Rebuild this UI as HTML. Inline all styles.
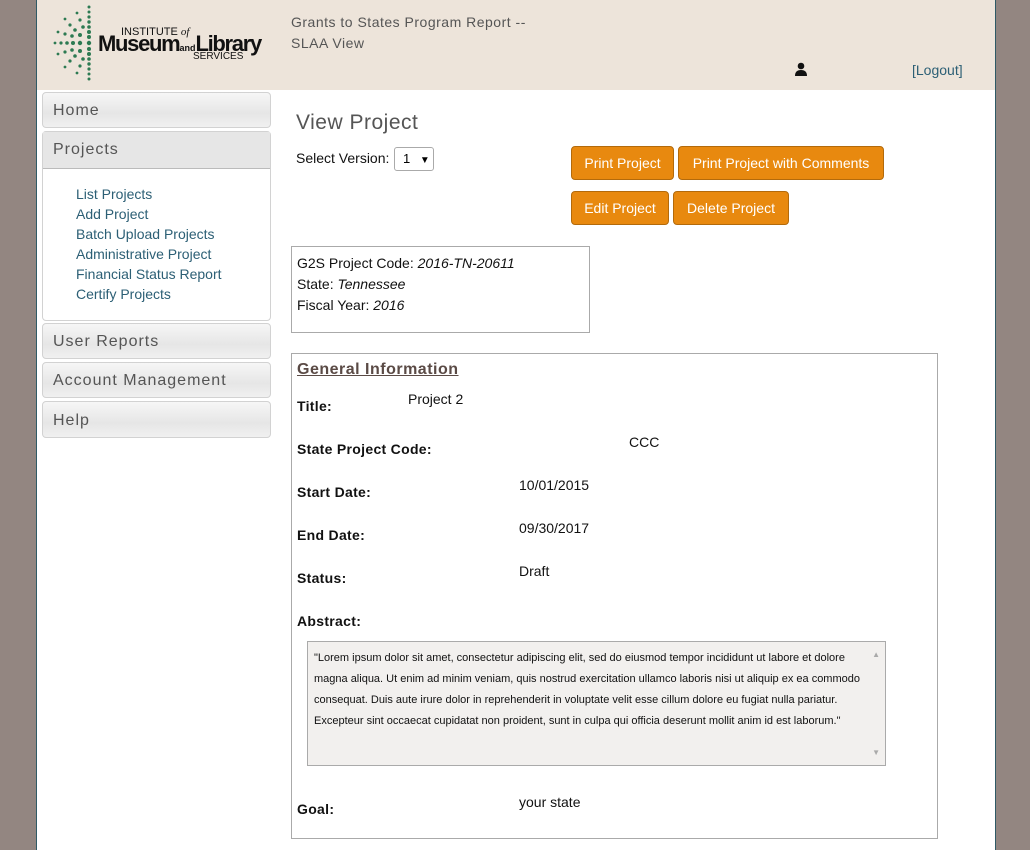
<!DOCTYPE html>
<html><head><style>
*{box-sizing:border-box}
body{margin:0;background:#938681;font-family:"Liberation Sans",Arial,sans-serif;width:1030px;height:850px;overflow:hidden}
#page{position:absolute;left:36px;top:0;width:960px;height:850px;background:#fff;border-left:1px solid #2f5a66;border-right:1px solid #2f5a66}
#hdr{position:absolute;left:0;top:0;width:958px;height:90px;background:#ede4da}
.abs{position:absolute}
.nav{position:absolute;left:5px;width:229px;border:1px solid #d2d2d2;border-radius:4px;background:linear-gradient(#f6f6f6,#e6e6e6 60%,#f0f0f0);color:#555;font-size:16px;letter-spacing:1px;padding-left:10px}
.btn{position:absolute;height:34px;background:#e8890f;border:1px solid #b36a0b;border-radius:4px;color:#fff;font-size:14px;line-height:32px;text-align:center}
.lbl{position:absolute;left:6px;font-weight:bold;font-size:14px;letter-spacing:.3px;color:#111}
.val{position:absolute;font-size:14px;color:#111}
.sub a{display:block;color:#2c5f75;font-size:14px;line-height:20px;text-decoration:none}
</style></head><body>
<div id="page">
<div id="hdr">
<svg class="abs" style="left:14px;top:4px" width="46" height="78" viewBox="0 0 46 78">
<g fill="#2d7a52">
<circle cx="38" cy="3" r="1.5"/><circle cx="38" cy="8" r="1.5"/><circle cx="38" cy="13" r="1.6"/><circle cx="38" cy="18" r="1.7"/><circle cx="38" cy="23" r="1.8"/><circle cx="38" cy="28" r="2"/><circle cx="38" cy="33" r="2"/><circle cx="38" cy="39" r="2.2"/><circle cx="38" cy="45" r="2"/><circle cx="38" cy="50" r="2"/><circle cx="38" cy="55" r="1.8"/><circle cx="38" cy="60" r="1.7"/><circle cx="38" cy="65" r="1.6"/><circle cx="38" cy="70" r="1.5"/><circle cx="38" cy="75" r="1.5"/>
<circle cx="4" cy="39" r="1.4"/><circle cx="10" cy="39" r="1.6"/><circle cx="16" cy="39" r="1.8"/><circle cx="22" cy="39" r="2"/><circle cx="29" cy="39" r="2.2"/>
<circle cx="14" cy="15" r="1.4"/><circle cx="19" cy="21" r="1.6"/><circle cx="24" cy="26" r="1.8"/><circle cx="29" cy="31" r="2"/>
<circle cx="14" cy="63" r="1.4"/><circle cx="19" cy="57" r="1.6"/><circle cx="24" cy="52" r="1.8"/><circle cx="29" cy="47" r="2"/>
<circle cx="7" cy="28" r="1.4"/><circle cx="14" cy="30" r="1.6"/><circle cx="21" cy="32" r="1.8"/>
<circle cx="7" cy="50" r="1.4"/><circle cx="14" cy="48" r="1.6"/><circle cx="21" cy="46" r="1.8"/>
<circle cx="26" cy="9" r="1.4"/><circle cx="29" cy="16" r="1.6"/><circle cx="32" cy="23" r="1.8"/>
<circle cx="26" cy="69" r="1.4"/><circle cx="29" cy="62" r="1.6"/><circle cx="32" cy="55" r="1.8"/>
</g></svg>
<div class="abs" style="left:84px;top:26px;font-size:11px;color:#111">INSTITUTE <i style="font-family:'Liberation Serif';">of</i></div>
<div class="abs" style="left:61px;top:31px;font-size:22px;font-weight:bold;color:#111;letter-spacing:-1.3px">Museum<span style="font-size:9px;letter-spacing:0">and</span>Library</div>
<div class="abs" style="left:156px;top:51px;font-size:10px;color:#111">SERVICES</div>
<div class="abs" style="left:254px;top:12px;font-size:14px;color:#555;line-height:21px;letter-spacing:.5px">Grants to States Program Report --<br>SLAA View</div>
<svg class="abs" style="left:757px;top:62px" width="14" height="14" viewBox="0 0 14 14"><circle cx="7" cy="4" r="3.3" fill="#111"/><path d="M1 14 Q1 8 7 8 Q13 8 13 14Z" fill="#111"/></svg>
<div class="abs" style="left:875px;top:62px;font-size:14px;color:#2c5f75">[Logout]</div>
</div>
<div class="nav" style="top:92px;height:36px;line-height:36px">Home</div>
<div class="nav" style="top:131px;height:190px;background:#fff;padding:0">
<div style="height:37px;line-height:36px;padding-left:10px;background:#e6e6e6;border-bottom:1px solid #bbb">Projects</div>
<div class="sub" style="padding:15px 0 0 33px;letter-spacing:0">
<a>List Projects</a><a>Add Project</a><a>Batch Upload Projects</a><a>Administrative Project</a><a>Financial Status Report</a><a>Certify Projects</a></div>
</div>
<div class="nav" style="top:323px;height:36px;line-height:36px">User Reports</div>
<div class="nav" style="top:362px;height:36px;line-height:36px">Account Management</div>
<div class="nav" style="top:401px;height:37px;line-height:37px">Help</div>

<div class="abs" style="left:259px;top:111px;font-size:21px;color:#555;letter-spacing:.5px">View Project</div>
<div class="abs" style="left:259px;top:150px;font-size:14px;color:#111">Select Version:</div>
<div class="abs" style="left:357px;top:147px;width:40px;height:24px;border:1px solid #aaa;border-radius:3px;font-size:13px;line-height:22px;padding-left:8px;background:#fff">1 <span style="font-size:10px;margin-left:6px">▼</span></div>
<div class="btn" style="left:534px;top:146px;width:103px">Print Project</div>
<div class="btn" style="left:641px;top:146px;width:206px">Print Project with Comments</div>
<div class="btn" style="left:534px;top:191px;width:98px">Edit Project</div>
<div class="btn" style="left:636px;top:191px;width:116px">Delete Project</div>

<div class="abs" style="left:254px;top:246px;width:299px;height:87px;border:1px solid #aaa;padding:6px 5px;font-size:14px;line-height:21px;color:#111">G2S Project Code: <i>2016-TN-20611</i><br>State: <i>Tennessee</i><br>Fiscal Year: <i>2016</i></div>

<div class="abs" style="left:254px;top:353px;width:647px;height:486px;border:1px solid #aaa">
<div class="abs" style="left:5px;top:7px;font-size:16px;font-weight:bold;color:#5a4a45;text-decoration:underline;letter-spacing:.5px">General Information</div>
<div class="lbl" style="top:44px;left:5px">Title:</div><div class="val" style="left:116px;top:37px">Project 2</div>
<div class="lbl" style="top:87px;left:5px">State Project Code:</div><div class="val" style="left:337px;top:80px">CCC</div>
<div class="lbl" style="top:130px;left:5px">Start Date:</div><div class="val" style="left:227px;top:123px">10/01/2015</div>
<div class="lbl" style="top:173px;left:5px">End Date:</div><div class="val" style="left:227px;top:166px">09/30/2017</div>
<div class="lbl" style="top:216px;left:5px">Status:</div><div class="val" style="left:227px;top:209px">Draft</div>
<div class="lbl" style="top:259px;left:5px">Abstract:</div>
<div class="abs" style="left:15px;top:287px;width:579px;height:125px;border:1px solid #aaa;background:#f2f0ee;padding:6px 20px 0 6px;font-size:11px;line-height:21px;color:#111">"Lorem ipsum dolor sit amet, consectetur adipiscing elit, sed do eiusmod tempor incididunt ut labore et dolore magna aliqua. Ut enim ad minim veniam, quis nostrud exercitation ullamco laboris nisi ut aliquip ex ea commodo consequat. Duis aute irure dolor in reprehenderit in voluptate velit esse cillum dolore eu fugiat nulla pariatur. Excepteur sint occaecat cupidatat non proident, sunt in culpa qui officia deserunt mollit anim id est laborum."
<span class="abs" style="right:5px;top:2px;font-size:8px;color:#aaa">▲</span><span class="abs" style="right:5px;bottom:2px;font-size:8px;color:#aaa">▼</span></div>
<div class="lbl" style="top:447px;left:5px">Goal:</div><div class="val" style="left:227px;top:440px">your state</div>
</div>
</div>
</body></html>
